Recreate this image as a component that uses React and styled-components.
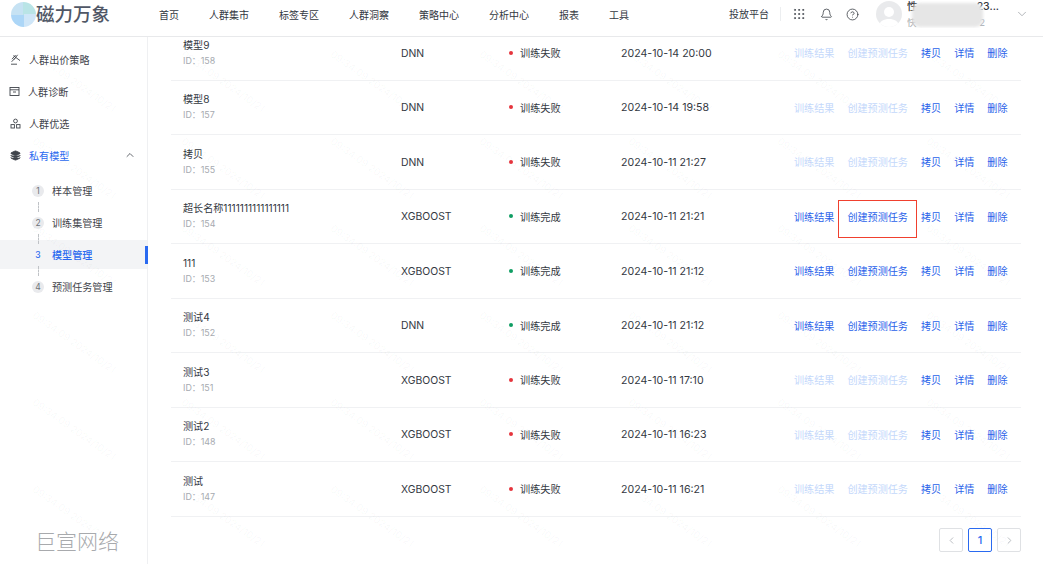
import React from 'react';
import styled, { createGlobalStyle } from 'styled-components';
import { Bell, ChevronDown, ChevronUp, ChevronLeft, ChevronRight, CircleHelp, Grip, Layers } from 'lucide-react';

const Global = createGlobalStyle`
  html, body { margin: 0; height: 100%; overflow: hidden; background: #fff; }
  body { font-family: Inter, "Noto Sans CJK SC", sans-serif; font-size: 10.1px; color: #33383f; }
`;
const Page = styled.div`
  width: 1043px; height: 564px; display: flex; flex-direction: column; overflow: hidden; position: relative;
`;
const Header = styled.header`
  height: 37px; box-sizing: border-box; padding-bottom: 8px; flex: none; display: flex; align-items: center; border-bottom: 1px solid #e8e9eb; background: #fff; position: relative; z-index: 1;
`;
const Logo = styled.div`
  width: 159px; display: flex; align-items: center; flex: none; padding-left: 11px; box-sizing: border-box;
`;
const LogoMark = styled.span`
  width: 25px; height: 25px; border-radius: 50%; flex: none;
  background: conic-gradient(#b9e4e6 0 25%, #cfe6f8 25% 50%, #acd6f7 50% 75%, #c6e2f3 75%);
`;
const LogoText = styled.span`
  font-size: 18.5px; font-weight: 500; color: #505766; white-space: nowrap; line-height: 24px;
`;
const Nav = styled.nav`
  display: flex; gap: 30px; font-size: 10px; color: #33383f;
`;
const NavLink = styled.span` white-space: nowrap; `;
const Right = styled.div`
  margin-left: auto; display: flex; align-items: center; height: 100%;
`;
const Platform = styled.span` white-space: nowrap; font-size: 10px; padding-right: 11px; border-right: 1px solid #eceef0; line-height: 14px; margin-right: 11px; `;
const IconBtn = styled.span`
  display: flex; margin-right: ${p => p.$gap}px; color: #3c4148;
`;
const Avatar = styled.span`
  width: 26px; height: 26px; border-radius: 50%; background: #e9eaec; flex: none; margin-right: 5px; display: flex; align-items: flex-end; justify-content: center; overflow: hidden;
`;
const User = styled.div`
  width: 92px; height: 28px; position: relative; line-height: 13px; white-space: nowrap; overflow: hidden;
`;
const UserName = styled.div` color: #33383f; font-weight: 500; font-size: 10.5px; display: flex; justify-content: space-between; `;
const UserSub = styled.div` color: #a3a7ad; font-size: 9.5px; margin-top: 3px; padding-right: 14px; display: flex; justify-content: space-between; `;
const Blur = styled.span`
  position: absolute; left: 5px; top: 3px; width: 71px; height: 24px; background: #e6e6e6; border-radius: 8px; filter: blur(1.5px);
`;
const Caret = styled.span` display: flex; margin: 0 14px 0 16px; color: #9a9ea4; `;
const Body = styled.div` flex: 1; display: flex; min-height: 0; `;
const Side = styled.aside`
  width: 148px; flex: none; border-right: 1px solid #eff0f2; box-sizing: border-box; padding-top: 6px; position: relative; display: flex; flex-direction: column;
`;
const MenuItem = styled.div`
  height: 32px; display: flex; align-items: center; padding-left: ${p => p.$pad || 10}px; color: ${p => p.$active ? '#2a6af0' : '#3f444b'}; position: relative;
`;
const MenuIcon = styled.span` display: flex; width: 19px; flex: none; color: #3f444b; `;
const Chev = styled.span` position: absolute; right: 11px; top: 10px; display: flex; color: #3f444b; `;
const Steps = styled.div` margin-top: 5px; display: flex; flex-direction: column; `;
const Step = styled.div`
  height: 29px; margin-bottom: 3px; display: flex; align-items: center; padding-left: 32px; gap: 8px; position: relative;
  background: ${p => p.$active ? '#f3f4f6' : 'transparent'};
  color: ${p => p.$active ? '#2a6af0' : '#3f444b'}; font-weight: ${p => p.$active ? 500 : 400};
  &:not(:last-child)::after {
    content: ''; position: absolute; left: 38px; top: 26px; height: 10px; border-left: 1px dashed #bfc2c6; z-index: 1;
  }
`;
const StepNum = styled.span`
  width: 12px; height: 12px; border-radius: 50%; background: ${p => p.$active ? 'transparent' : '#e9eaed'}; font-size: 8.5px; color: ${p => p.$active ? '#2a6af0' : '#6e7278'};
  display: flex; align-items: center; justify-content: center; flex: none;
`;
const ActiveBar = styled.span` position: absolute; right: -1px; top: 6px; width: 3px; height: 18px; background: #2a6af0; `;
const Brand = styled.div`
  position: absolute; left: 35px; top: 490px; font-size: 21px; line-height: 26px; color: #a8aaad; font-family: "Noto Sans CJK SC", sans-serif; font-weight: 300;
`;
const Main = styled.main` flex: 1; min-width: 0; padding: 0 22px 0 23px; overflow: hidden; display: flex; flex-direction: column; `;
const List = styled.div` margin-top: -11px; `;
const Row = styled.div`
  height: 54.5px; box-sizing: border-box; border-bottom: 1px solid #f0f1f3; display: grid;
  grid-template-columns: 218px 108px 112px 173px 1fr; align-items: center; padding-left: 12px; white-space: nowrap;
`;
const Name = styled.div` font-size: 10.1px; line-height: 15px; color: #33383f; `;
const Id = styled.div` font-size: 8.9px; line-height: 14px; color: #a6aab0; margin-top: 1px; `;
const Type = styled.div` font-size: 10.4px; padding-top: 1px; `;
const Time = styled.div` font-size: 10.6px; padding-top: 1px; `;
const Status = styled.div` display: flex; align-items: center; gap: 7px; font-size: 10.2px; `;
const Dot = styled.span` width: 4px; height: 4px; border-radius: 50%; background: ${p => p.$ok ? '#0f9d63' : '#e5343d'}; flex: none; `;
const Actions = styled.div` display: flex; position: relative; font-size: 10.1px; `;
const Act = styled.span`
  margin-right: ${p => p.$gap}px; color: ${p => p.$off ? '#c4d8fb' : '#2a62ea'};
`;
const Highlight = styled.span` position: absolute; left: 44px; top: -9px; width: 79px; height: 38px; border: 1.5px solid #f0402e; box-sizing: border-box; `;
const Pager = styled.div` display: flex; justify-content: flex-end; gap: 5px; margin-top: 11.5px; `;
const PageBtn = styled.span`
  width: 24px; height: 24px; box-sizing: border-box; border: 1px solid ${p => p.$on ? '#2a6af0' : '#dfe1e4'}; color: ${p => p.$on ? '#2a6af0' : '#b6b9bd'}; border-radius: 2px;
  display: flex; align-items: center; justify-content: center; font-size: 11px; font-weight: 500;
`;
const Marks = styled.div`
  position: absolute; inset: 37px 0 0 0; pointer-events: none; display: grid; grid-template-columns: repeat(7, 149px); grid-auto-rows: 87px; overflow: hidden; z-index: 2;
`;
const Mark = styled.span`
  font-size: 10px; color: rgba(90,95,105,.045); transform: rotate(35deg); white-space: nowrap; align-self: center; justify-self: center;
`;

const StrategyIcon = () => (
  <svg width="11" height="11" viewBox="0 0 11 11" fill="none" stroke="currentColor" strokeWidth="0.9">
    <path d="M1 10.2h6" />
    <path d="M5.6 1 2 5.2M3.4 1.6l6.6 5M7.6.8 4 5.6M1.6 7.8 5 4.2" />
  </svg>
);
const DiagnoseIcon = () => (
  <svg width="11" height="11" viewBox="0 0 11 11" fill="none" stroke="currentColor" strokeWidth="0.9">
    <rect x="1" y="1.5" width="9" height="8" />
    <path d="M1 3.8h9M4 6h3" />
  </svg>
);
const SelectIcon = () => (
  <svg width="11" height="11" viewBox="0 0 11 11" fill="none" stroke="currentColor" strokeWidth="0.9">
    <circle cx="5.5" cy="3" r="1.9" />
    <rect x="1" y="6.6" width="3.4" height="3.4" />
    <rect x="6.6" y="6.6" width="3.4" height="3.4" />
  </svg>
);

const rows = [
  ['模型9', 158, 'DNN', false, '2024-10-14 20:00'],
  ['模型8', 157, 'DNN', false, '2024-10-14 19:58'],
  ['拷贝', 155, 'DNN', false, '2024-10-11 21:27'],
  ['超长名称1111111111111111', 154, 'XGBOOST', true, '2024-10-11 21:21', true],
  ['111', 153, 'XGBOOST', true, '2024-10-11 21:12'],
  ['测试4', 152, 'DNN', true, '2024-10-11 21:12'],
  ['测试3', 151, 'XGBOOST', false, '2024-10-11 17:10'],
  ['测试2', 148, 'XGBOOST', false, '2024-10-11 16:23'],
  ['测试', 147, 'XGBOOST', false, '2024-10-11 16:21'],
];
const nav = ['首页', '人群集市', '标签专区', '人群洞察', '策略中心', '分析中心', '报表', '工具'];
const steps = ['样本管理', '训练集管理', '模型管理', '预测任务管理'];

export default function App() {
  return (
    <Page>
      <Global />
      <Header>
        <Logo><LogoMark /><LogoText>磁力万象</LogoText></Logo>
        <Nav>{nav.map(n => <NavLink key={n}>{n}</NavLink>)}</Nav>
        <Right>
          <Platform>投放平台</Platform>
          <IconBtn $gap={14}><Grip size={14} strokeWidth={1.4} /></IconBtn>
          <IconBtn $gap={13}><Bell size={13} strokeWidth={1.5} /></IconBtn>
          <IconBtn $gap={17}><CircleHelp size={13} strokeWidth={1.5} /></IconBtn>
          <Avatar>
            <svg width="22" height="24" viewBox="0 0 22 24" fill="#fff"><circle cx="11" cy="9" r="5" /><path d="M1 24c0-6 5-8 10-8s10 2 10 8z" /></svg>
          </Avatar>
          <User>
            <UserName><span>性</span><span>23...</span></UserName>
            <UserSub><span>快</span><span>2</span></UserSub>
            <Blur />
          </User>
          <Caret><ChevronDown size={14} strokeWidth={1.3} /></Caret>
        </Right>
      </Header>
      <Body>
        <Side>
          <MenuItem><MenuIcon><StrategyIcon /></MenuIcon>人群出价策略</MenuItem>
          <MenuItem $pad={9}><MenuIcon><DiagnoseIcon /></MenuIcon>人群诊断</MenuItem>
          <MenuItem><MenuIcon><SelectIcon /></MenuIcon>人群优选</MenuItem>
          <MenuItem $active><MenuIcon><Layers size={11} strokeWidth={2} fill="#3f444b" /></MenuIcon>私有模型<Chev><ChevronUp size={12} strokeWidth={1.6} /></Chev></MenuItem>
          <Steps>
            {steps.map((s, i) => (
              <Step key={s} $active={i === 2}>
                <StepNum $active={i === 2}>{i + 1}</StepNum>{s}{i === 2 && <ActiveBar />}
              </Step>
            ))}
          </Steps>
          <Brand>巨宣网络</Brand>
        </Side>
        <Main>
          <List>
            {rows.map(r => (
              <Row key={r[1]}>
                <div><Name>{r[0]}</Name><Id>ID：{r[1]}</Id></div>
                <Type>{r[2]}</Type>
                <Status><Dot $ok={r[3]} />{r[3] ? '训练完成' : '训练失败'}</Status>
                <Time>{r[4]}</Time>
                <Actions>
                  <Act $off={!r[3]} $gap={13}>训练结果</Act>
                  <Act $off={!r[3]} $gap={13}>创建预测任务</Act>
                  <Act $gap={13}>拷贝</Act>
                  <Act $gap={13}>详情</Act>
                  <Act $gap={0}>删除</Act>
                  {r[5] && <Highlight />}
                </Actions>
              </Row>
            ))}
          </List>
          <Pager>
            <PageBtn><ChevronLeft size={11} /></PageBtn>
            <PageBtn $on>1</PageBtn>
            <PageBtn><ChevronRight size={11} /></PageBtn>
          </Pager>
        </Main>
      </Body>
      <Marks aria-hidden="true">
        {Array.from({ length: 42 }, (_, i) => <Mark key={i}>09:34:09 2024/10/21</Mark>)}
      </Marks>
    </Page>
  );
}
